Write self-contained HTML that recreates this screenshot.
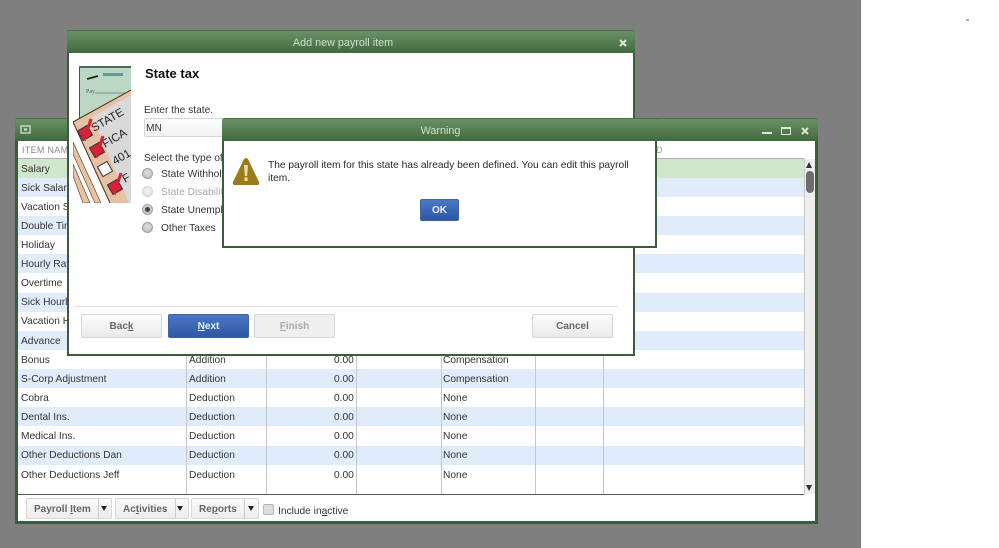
<!DOCTYPE html>
<html><head><meta charset="utf-8">
<style>
*{box-sizing:border-box}
html,body{margin:0;padding:0;width:999px;height:548px;overflow:hidden;background:#fff}
body{font-family:"Liberation Sans",sans-serif;font-size:10.2px;color:#333;position:relative}
.a{position:absolute}
.t{position:absolute;white-space:nowrap;line-height:12px;margin-top:1px}
.win{position:absolute;background:#fff;border-style:solid;border-width:0 2px 2px 2px;border-color:#3d5c3d;border-radius:3px 3px 0 0}
.bar{position:absolute;left:-2px;right:-2px;top:0;height:23px;background:linear-gradient(#6a9167,#3f6a3d);border-radius:3px 3px 0 0;color:#d3dfd1;text-align:center;font-size:10.8px;line-height:25px;border-top:1px solid #4d6f4b}
.btn{position:absolute;height:24px;border:1px solid #d6d6d6;border-radius:2px;background:linear-gradient(#fdfdfd,#e9e9e9);text-align:center;font-weight:bold;font-size:10px;line-height:23px;color:#666}
.blue{background:linear-gradient(#4a78c4,#2f57a3);border-color:#3d64a8;color:#e8eef8}
.radio{position:absolute;left:142px;width:11px;height:11px;border-radius:50%;background:radial-gradient(circle at 50% 40%,#e2e2e2,#b4b4b4);border:1px solid #a2a2a2}
u{text-decoration:underline}
.l{position:absolute;top:159px;height:335px;width:1px;background:#c4c7cc}
.b2{position:absolute;top:498px;height:21px;background:linear-gradient(#fafafa,#ececec);border:1px solid #d8d8d8;border-radius:2px;font-weight:bold;color:#666;font-size:10px;line-height:21px}
.arr{position:absolute;width:0;height:0;border-left:3.5px solid transparent;border-right:3.5px solid transparent;border-top:5px solid #222}
</style></head><body>
<div class="a" style="left:0;top:0;width:861px;height:548px;background:#7f7f7f"></div>
<div class="a" style="left:966px;top:19px;width:3px;height:2px;background:#aaa"></div>

<!-- main window -->
<div class="win" style="left:15px;top:118px;width:803px;height:406px;border-width:0 3px 3px 3px">
  <div class="bar" style="left:-3px;right:-3px"></div>
</div>
<svg class="a" style="left:20px;top:125px" width="12" height="10"><rect x="1" y="1" width="9" height="7" fill="none" stroke="#dfe8dc" stroke-width="1.2"/><rect x="4" y="3.500" width="3" height="2" fill="#dfe8dc"/></svg>
<div class="a" style="left:762px;top:132px;width:10px;height:2px;background:#dde6da"></div>
<div class="a" style="left:781px;top:127px;width:10px;height:8px;border:1.500px solid #dde6da;border-top-width:2px"></div>
<svg class="a" style="left:801px;top:127px" width="8" height="8"><path d="M1 1L7 7M7 1L1 7" stroke="#dde6da" stroke-width="2"/></svg>

<div class="t" style="left:22px;top:143px;color:#8a8a8a;font-size:9px;letter-spacing:.3px">ITEM NAME</div>
<div class="t" style="left:656px;top:143px;color:#999;font-size:9px">D</div>
<div class="a" style="left:18px;top:158px;width:786px;height:1px;background:#aeb2ae"></div>

<div class="a" style="left:18px;top:159px;width:786px;height:19px;background:#d2e6cd"></div>
<div class="a" style="left:18px;top:178px;width:786px;height:19px;background:#e1ecfb"></div>
<div class="a" style="left:18px;top:216px;width:786px;height:19px;background:#e1ecfb"></div>
<div class="a" style="left:18px;top:254px;width:786px;height:19px;background:#e1ecfb"></div>
<div class="a" style="left:18px;top:293px;width:786px;height:19px;background:#e1ecfb"></div>
<div class="a" style="left:18px;top:331px;width:786px;height:19px;background:#e1ecfb"></div>
<div class="a" style="left:18px;top:369px;width:786px;height:19px;background:#e1ecfb"></div>
<div class="a" style="left:18px;top:407px;width:786px;height:19px;background:#e1ecfb"></div>
<div class="a" style="left:18px;top:446px;width:786px;height:19px;background:#e1ecfb"></div>

<div class="l" style="left:186px"></div><div class="l" style="left:266px"></div><div class="l" style="left:356px"></div><div class="l" style="left:441px"></div><div class="l" style="left:535px"></div><div class="l" style="left:603px"></div>

<div class="t" style="left:21px;top:163px">Salary</div>
<div class="t" style="left:21px;top:182px">Sick Salary</div>
<div class="t" style="left:21px;top:201px">Vacation Salary</div>
<div class="t" style="left:21px;top:220px">Double Time</div>
<div class="t" style="left:21px;top:239px">Holiday</div>
<div class="t" style="left:21px;top:258px">Hourly Rate</div>
<div class="t" style="left:21px;top:277px">Overtime</div>
<div class="t" style="left:21px;top:296px">Sick Hourly</div>
<div class="t" style="left:21px;top:315px">Vacation Hourly</div>
<div class="t" style="left:21px;top:335px">Advance</div>
<div class="t" style="left:21px;top:354px">Bonus</div>
<div class="t" style="left:21px;top:373px">S-Corp Adjustment</div>
<div class="t" style="left:21px;top:392px">Cobra</div>
<div class="t" style="left:21px;top:411px">Dental Ins.</div>
<div class="t" style="left:21px;top:430px">Medical Ins.</div>
<div class="t" style="left:21px;top:449px">Other Deductions Dan</div>
<div class="t" style="left:21px;top:469px">Other Deductions Jeff</div>

<div class="t" style="left:189px;top:354px">Addition</div>
<div class="t" style="left:189px;top:373px">Addition</div>
<div class="t" style="left:189px;top:392px">Deduction</div>
<div class="t" style="left:189px;top:411px">Deduction</div>
<div class="t" style="left:189px;top:430px">Deduction</div>
<div class="t" style="left:189px;top:449px">Deduction</div>
<div class="t" style="left:189px;top:469px">Deduction</div>

<div class="t" style="left:334px;top:354px">0.00</div>
<div class="t" style="left:334px;top:373px">0.00</div>
<div class="t" style="left:334px;top:392px">0.00</div>
<div class="t" style="left:334px;top:411px">0.00</div>
<div class="t" style="left:334px;top:430px">0.00</div>
<div class="t" style="left:334px;top:449px">0.00</div>
<div class="t" style="left:334px;top:469px">0.00</div>

<div class="t" style="left:443px;top:354px">Compensation</div>
<div class="t" style="left:443px;top:373px">Compensation</div>
<div class="t" style="left:443px;top:392px">None</div>
<div class="t" style="left:443px;top:411px">None</div>
<div class="t" style="left:443px;top:430px">None</div>
<div class="t" style="left:443px;top:449px">None</div>
<div class="t" style="left:443px;top:469px">None</div>

<!-- scrollbar -->
<div class="a" style="left:804px;top:159px;width:11px;height:335px;background:#eeeeee;border-left:1px solid #c4c7cc"></div>
<div class="a" style="left:806px;top:162px;width:0;height:0;border-left:3.500px solid transparent;border-right:3.500px solid transparent;border-bottom:6px solid #333"></div>
<div class="a" style="left:806px;top:171px;width:8px;height:22px;background:#6d6d6d;border-radius:4px"></div>
<div class="a" style="left:806px;top:485px;width:0;height:0;border-left:3.500px solid transparent;border-right:3.500px solid transparent;border-top:6px solid #333"></div>
<div class="a" style="left:18px;top:494px;width:786px;height:1px;background:#555"></div>

<!-- footer buttons -->
<div class="b2" style="left:26px;width:86px;padding-left:7px">Payroll <u>I</u>tem<div class="a" style="left:71px;top:0;width:1px;height:19px;background:#ccc"></div></div>
<div class="arr" style="left:101px;top:506px"></div>
<div class="b2" style="left:115px;width:74px;padding-left:7px">Ac<u>t</u>ivities<div class="a" style="left:59px;top:0;width:1px;height:19px;background:#ccc"></div></div>
<div class="arr" style="left:177px;top:506px"></div>
<div class="b2" style="left:191px;width:68px;padding-left:7px">Re<u>p</u>orts<div class="a" style="left:52px;top:0;width:1px;height:19px;background:#ccc"></div></div>
<div class="arr" style="left:248px;top:506px"></div>
<div class="a" style="left:263px;top:504px;width:11px;height:11px;background:#dcdcdc;border:1px solid #b5b5b5;border-radius:2px"></div>
<div class="t" style="left:278px;top:505px">Include in<u>a</u>ctive</div>

<!-- add payroll dialog -->
<div class="win" style="left:67px;top:30px;width:568px;height:326px">
  <div class="bar" style="padding-right:16px">Add new payroll item</div>
</div>
<svg class="a" style="left:619px;top:39px" width="8" height="8"><path d="M1 1L7 7M7 1L1 7" stroke="#dde6da" stroke-width="2"/></svg>

<svg class="a" style="left:73px;top:66px" width="58" height="137" viewBox="0 0 58 137">
  <rect x="6.500" y=".5" width="52" height="60" fill="#bcd8c4" stroke="#3f5a4a" stroke-width="1"/>
  <rect x="6" y="0" width="52" height="2" fill="#4a6a5a"/>
  <path d="M14 13l11-3" stroke="#222" stroke-width="1.800"/>
  <rect x="30" y="7" width="20" height="3" fill="#5f9a90"/>
  <path d="M22 27H58" stroke="#7a9a88" stroke-width="1"/>
  <text x="13" y="27" font-size="6" fill="#556" font-family="Liberation Serif,serif">Pay</text>
  <!-- back sheets -->
  <path d="M0 76L28 137H22L0 88Z" fill="#e6c2a4" stroke="#6b4a30" stroke-width=".7"/>
  <path d="M0 98L17 137H10L0 110Z" fill="#e6c2a4" stroke="#6b4a30" stroke-width=".7"/>
  <!-- main sheet -->
  <path d="M0 56L58 24V137H37Z" fill="#e6c2a4"/>
  <path d="M0 56L58 24M0 56L37 137" fill="none" stroke="#4a3020" stroke-width="1"/>
  <path d="M19 51L58 29V137H56Z" fill="#d9d9d9"/>
  <g font-family="Liberation Sans,sans-serif" font-size="11.500" fill="#222">
    <text x="21" y="66" transform="rotate(-30 21 66)">STATE</text>
    <text x="32" y="82" transform="rotate(-30 32 82)">FICA</text>
    <text x="42" y="99" transform="rotate(-30 42 99)">401</text>
    <text x="52" y="117" transform="rotate(-30 52 117)">F</text>
  </g>
  <g stroke="#333" stroke-width="1">
    <rect x="6.500" y="61.500" width="11" height="11" transform="rotate(-30 12 67)" fill="#d8233a"/>
    <rect x="18.500" y="78.500" width="11" height="11" transform="rotate(-30 24 84)" fill="#d8233a"/>
    <rect x="26.500" y="97.500" width="11" height="11" transform="rotate(-30 32 103)" fill="#fff"/>
    <rect x="36.500" y="115.500" width="11" height="11" transform="rotate(-30 42 121)" fill="#d8233a"/>
  </g>
  <path d="M7 64l5 8 6-19" fill="none" stroke="#d8203a" stroke-width="3"/>
  <path d="M19 81l5 8 6-19" fill="none" stroke="#d8203a" stroke-width="3"/>
  <path d="M37 118l5 8 6-19" fill="none" stroke="#d8203a" stroke-width="3"/>
</svg>

<div class="t" style="left:145px;top:66px;font-size:13px;font-weight:bold;color:#111;line-height:14px">State tax</div>
<div class="t" style="left:144px;top:104px">Enter the state.</div>
<div class="a" style="left:144px;top:118px;width:90px;height:19px;border:1px solid #d6d6d6;border-radius:2px;background:linear-gradient(#fff,#f1f1f1)"></div>
<div class="t" style="left:146px;top:122px">MN</div>
<div class="t" style="left:144px;top:152px">Select the type of tax you want to track.</div>
<div class="radio" style="top:168px"></div><div class="t" style="left:161px;top:168px">State Withholding</div>
<div class="radio" style="top:186px;opacity:.45"></div><div class="t" style="left:161px;top:186px;color:#aaa">State Disability</div>
<div class="radio" style="top:204px"></div><div class="a" style="left:145px;top:207px;width:5px;height:5px;border-radius:50%;background:#444"></div><div class="t" style="left:161px;top:204px">State Unemployment</div>
<div class="radio" style="top:222px"></div><div class="t" style="left:161px;top:222px">Other Taxes</div>

<div class="a" style="left:75px;top:306px;width:543px;height:1px;background:#ddd"></div>
<div class="btn" style="left:81px;top:314px;width:81px">Bac<u>k</u></div>
<div class="btn blue" style="left:168px;top:314px;width:81px"><u>N</u>ext</div>
<div class="btn" style="left:254px;top:314px;width:81px;color:#aaa;background:#efefef"><u>F</u>inish</div>
<div class="btn" style="left:532px;top:314px;width:81px">Cancel</div>

<!-- warning -->
<div class="win" style="left:222px;top:118px;width:435px;height:130px">
  <div class="bar" style="padding-left:2px">Warning</div>
</div>
<svg class="a" style="left:232px;top:157px" width="28" height="29" viewBox="0 0 28 29">
  <path d="M14 1Q15.500 1 16.500 3L27 25Q28 28 25 28H3Q0 28 1 25L11.500 3Q12.500 1 14 1Z" fill="#9a7c1c"/>
  <path d="M12 8h4l-.8 11h-2.400z" fill="#e9dca8"/><rect x="12.300" y="20.500" width="3.400" height="3.400" fill="#e9dca8"/>
</svg>
<div class="t" style="left:268px;top:158px;width:375px;white-space:normal;line-height:13px;color:#2a2a2a">The payroll item for this state has already been defined. You can edit this payroll item.</div>
<div class="btn blue" style="left:420px;top:199px;width:39px;height:22px;line-height:21px">OK</div>
</body></html>
